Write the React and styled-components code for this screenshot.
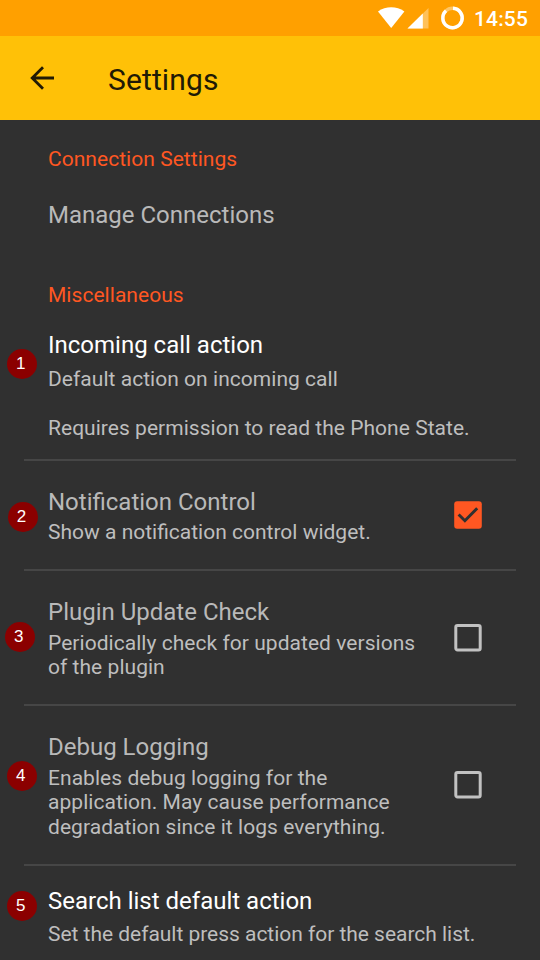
import React from 'react';
import styled, { createGlobalStyle } from 'styled-components';

const GlobalStyle = createGlobalStyle`
  * { box-sizing: border-box; }
  body { margin: 0; background: #303030; overflow: hidden; }
`;

const Screen = styled.div`
  width: 540px;
  height: 960px;
  overflow: hidden;
  background: #303030;
  color: #bebebe;
  font-family: Roboto, sans-serif;
`;

const StatusBar = styled.header`
  display: flex;
  justify-content: flex-end;
  height: 36px;
  background: #ffa000;
  color: #fff;
`;

const StatusIcons = styled.svg`
  width: 96px;
  height: 36px;
`;

const Clock = styled.time`
  width: 66px;
  padding-top: 1px;
  font-size: 21px;
  font-weight: 500;
  line-height: 36px;
  letter-spacing: 0.15px;
`;

const Toolbar = styled.nav`
  display: flex;
  align-items: center;
  height: 84px;
  padding-left: 24px;
  background: #ffc107;
  color: #211a05;
`;

const BackButton = styled.button`
  width: 84px;
  height: 36px;
  padding: 0;
  border: 0;
  background: none;
  color: inherit;
  text-align: left;
`;

const Heading = styled.h1`
  margin: 0;
  padding-top: 3px;
  font-size: 30px;
  font-weight: 400;
  line-height: 36px;
  letter-spacing: 0.12px;
`;

const SectionTitle = styled.h2`
  height: 60px;
  margin: 0;
  padding: 27px 0 0 48px;
  color: #ff5722;
  font-size: 21px;
  font-weight: 400;
  line-height: 24.6px;
  letter-spacing: 0.04px;
`;

const Row = styled.section`
  position: relative;
  display: flex;
  height: ${(p) => p.$height}px;
  padding: ${(p) => p.$top}px 58px 0 48px;
`;

const Divider = styled.hr`
  height: 2px;
  margin: 0 24px;
  border: 0;
  background: #464646;
`;

const Copy = styled.div`
  flex: 1;
  white-space: nowrap;
`;

const Title = styled.h3`
  margin: 0 0 ${(p) => p.$gap}px;
  color: ${(p) => (p.$bright ? '#fff' : '#b9b9b9')};
  font-size: 24px;
  font-weight: 400;
  line-height: 28px;
`;

const Description = styled.p`
  margin: 0;
  color: #bebebe;
  font-size: 21px;
  line-height: 24.6px;
  letter-spacing: ${(p) => (p.$tracking ? `${p.$tracking}px` : 'normal')};
  white-space: pre-line;
`;

const Badge = styled.span`
  position: absolute;
  left: ${(p) => p.$x}px;
  top: ${(p) => p.$y}px;
  width: 30px;
  height: 30px;
  padding-right: 2px;
  border-radius: 50%;
  background: #8b0000;
  color: #fff;
  font: 17px/30px 'Liberation Sans', sans-serif;
  text-align: center;
`;

const CheckSlot = styled.span`
  width: 28px;
  height: 28px;
  margin-top: ${(p) => p.$offset}px;
  flex: none;
`;

function Checkbox({ checked, offset }) {
  return (
    <CheckSlot $offset={offset} role="checkbox" aria-checked={checked}>
      <svg width="28" height="28" viewBox="0 0 28 28" fill="none">
        {checked ? (
          <>
            <rect x=".2" y=".2" width="27.6" height="27.6" rx="3" fill="#ff5722" />
            <path d="m4.6 13.5 6.3 6.2L23.2 7.3" stroke="#303030" strokeWidth="3" />
          </>
        ) : (
          <rect x="1.8" y="1.6" width="24.4" height="24.3" rx="1.7" stroke="#c1c1c1" strokeWidth="3" />
        )}
      </svg>
    </CheckSlot>
  );
}

function Preference({ number, badgeX, badgeY, height, top, title, text, bright, gap, tracking, checked, checkOffset }) {
  return (
    <Row $height={height} $top={top}>
      {number && <Badge $x={badgeX} $y={badgeY}>{number}</Badge>}
      <Copy>
        <Title $bright={bright} $gap={gap ?? 0}>{title}</Title>
        {text && <Description $tracking={tracking}>{text}</Description>}
      </Copy>
      {checked !== undefined && <Checkbox checked={checked} offset={checkOffset} />}
    </Row>
  );
}

export default function App() {
  return (
    <>
      <GlobalStyle />
      <Screen>
        <StatusBar>
          <StatusIcons viewBox="378 0 96 36" fill="none">
            <path d="M378 11.4C385.8 5.8 396.6 5.8 404.4 11.4L391.2 28Z" fill="#fff" />
            <path d="M428.5 8V28.5H407.5Z" fill="#fff" fillOpacity=".35" />
            <path d="M422.8 13.6V28.5H407.5Z" fill="#fff" />
            <circle cx="452.5" cy="18" r="9.7" stroke="#fff" strokeOpacity=".4" strokeWidth="3.4" />
            <path d="M453 8.3A9.7 9.7 0 1 1 446 10.8" stroke="#fff" strokeWidth="3.4" />
          </StatusIcons>
          <Clock>14:55</Clock>
        </StatusBar>
        <Toolbar>
          <BackButton aria-label="Back">
            <svg width="36" height="36" viewBox="0 0 36 36" fill="none" stroke="currentColor" strokeWidth="2.8">
              <path d="M30 18H8M19 7.2 8.2 18 19 28.8" />
            </svg>
          </BackButton>
          <Heading>Settings</Heading>
        </Toolbar>
        <main>
          <SectionTitle>Connection Settings</SectionTitle>
          <Preference height={76} top={21} title="Manage Connections" />
          <SectionTitle>Miscellaneous</SectionTitle>
          <Preference number={1} badgeX={6.8} badgeY={32.5} height={143} top={15} bright gap={7.5}
            tracking={0.035} title="Incoming call action"
            text={'Default action on incoming call\n\nRequires permission to read the Phone State.'} />
          <Divider />
          <Preference number={2} badgeX={7.6} badgeY={40.5} height={108} top={27} gap={4}
            title="Notification Control" text="Show a notification control widget."
            checked checkOffset={13} />
          <Divider />
          <Preference number={3} badgeX={4.7} badgeY={50.6} height={133} top={27} gap={4.5}
            tracking={0.04} title="Plugin Update Check"
            text={'Periodically check for updated versions\nof the plugin'}
            checked={false} checkOffset={26} />
          <Divider />
          <Preference number={4} badgeX={6.7} badgeY={54.5} height={158} top={27} gap={4.5}
            tracking={0.05} title="Debug Logging"
            text={'Enables debug logging for the\napplication. May cause performance\ndegradation since it logs everything.'}
            checked={false} checkOffset={38} />
          <Divider />
          <Preference number={5} badgeX={6.7} badgeY={24.7} height={94} top={21} bright gap={7}
            tracking={-0.03} title="Search list default action"
            text="Set the default press action for the search list." />
        </main>
      </Screen>
    </>
  );
}
